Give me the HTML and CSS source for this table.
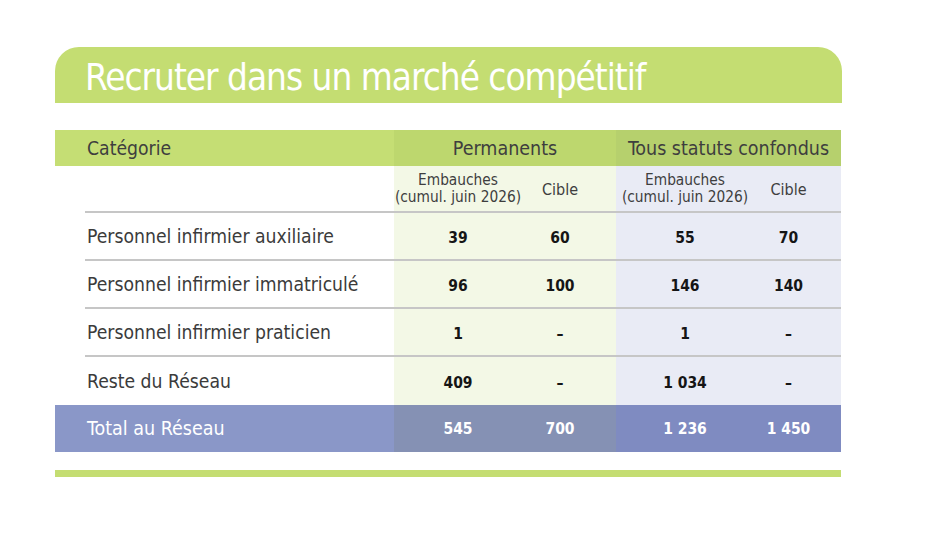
FILE: index.html
```html
<!DOCTYPE html>
<html lang="fr">
<head>
<meta charset="utf-8">
<title>Recruter dans un marché compétitif</title>
<link rel="stylesheet" href="styles.css">
</head>
<body>
<div class="page">
  <h1 class="banner">Recruter dans un marché compétitif</h1>
  <div class="table">
    <div class="h h-cat">Catégorie</div>
    <div class="h h-perm">Permanents</div>
    <div class="h h-tous">Tous statuts confondus</div>

    <div class="lab sub"></div>
    <div class="c perm sub emb">Embauches<br>(cumul. juin 2026)</div>
    <div class="c perm sub cib">Cible</div>
    <div class="c tous sub emb">Embauches<br>(cumul. juin 2026)</div>
    <div class="c tous sub cib">Cible</div>

    <div class="lab row">Personnel infirmier auxiliaire</div>
    <div class="c perm row num">39</div>
    <div class="c perm row num cib">60</div>
    <div class="c tous row num">55</div>
    <div class="c tous row num cib">70</div>

    <div class="lab row">Personnel infirmier immatriculé</div>
    <div class="c perm row num">96</div>
    <div class="c perm row num cib">100</div>
    <div class="c tous row num">146</div>
    <div class="c tous row num cib">140</div>

    <div class="lab row">Personnel infirmier praticien</div>
    <div class="c perm row num">1</div>
    <div class="c perm row num cib">–</div>
    <div class="c tous row num">1</div>
    <div class="c tous row num cib">–</div>

    <div class="lab row last">Reste du Réseau</div>
    <div class="c perm row last num">409</div>
    <div class="c perm row last num cib">–</div>
    <div class="c tous row last num">1 034</div>
    <div class="c tous row last num cib">–</div>

    <div class="t t-lab">Total au Réseau</div>
    <div class="t t-perm">545</div>
    <div class="t t-perm cib">700</div>
    <div class="t t-tous">1 236</div>
    <div class="t t-tous cib">1 450</div>
  </div>
  <div class="footer-bar"></div>
</div>
</body>
</html>
```

FILE: styles.css
```css
* { box-sizing: border-box; }
html, body { margin: 0; padding: 0; background: #ffffff; }
body {
  font-family: "DejaVu Sans Condensed", "DejaVu Sans", "Liberation Sans", sans-serif;
  font-stretch: condensed;
  color: #3b3b3b;
}
.page {
  width: 941px;
  height: 545px;
  padding: 47px 0 0 55px;
}
.banner {
  width: 787px;
  height: 56px;
  margin: 0;
  background: #c4dd72;
  border-radius: 24px 24px 0 0;
  color: #ffffff;
  font-weight: normal;
  font-size: 36.6px;
  line-height: 61px;
  padding-left: 30px;
  letter-spacing: -1px;
  white-space: nowrap;
}
.table {
  margin-top: 27px;
  width: 786px;
  display: grid;
  grid-template-columns: 339px 128px 94px 138px 87px;
}
.h {
  height: 36px;
  line-height: 38px;
  font-size: 19.5px;
  color: #3e3e3e;
}
.h-cat { background: #c5de74; padding-left: 32px; font-size: 19.2px; }
.h-perm { background: #bdd76e; grid-column: span 2; text-align: center; }
.h-tous { background: #b6d06d; grid-column: span 2; text-align: center; }

.lab {
  margin-left: 30px;
  padding-left: 2px;
  border-bottom: 2px solid #c6c6c6;
  font-size: 19.2px;
  display: flex;
  align-items: center;
  color: #3b3b3b;
  white-space: nowrap;
}
.c {
  border-bottom: 2px solid #c6c6c6;
  display: flex;
  align-items: center;
  justify-content: center;
  text-align: center;
  white-space: nowrap;
}
.perm { background: #f3f8e6; }
.tous { background: #e9ebf5; }
.cib { padding-right: 18px; }
.sub { height: 47px; font-size: 15.3px; line-height: 17px; color: #3e3e3e; padding-top: 1px; }
.sub.cib { font-size: 16px; }
.row { height: 48px; }
.row.last { border-bottom: none; }
.num { font-weight: bold; font-size: 15.5px; color: #151515; padding-top: 3px; }

.t {
  height: 47px;
  display: flex;
  align-items: center;
  justify-content: center;
  color: #ffffff;
  font-size: 15.5px;
  font-weight: bold;
  white-space: nowrap;
}
.t-lab {
  background: #8a97c8;
  justify-content: flex-start;
  padding-left: 32px;
  font-size: 19.5px;
  font-weight: normal;
}
.t-perm { background: #8591b4; }
.t-tous { background: #7f8bc1; }
.t.cib { padding-right: 18px; }

.footer-bar {
  margin-top: 18px;
  width: 786px;
  height: 7px;
  background: #c4dd72;
}
```
